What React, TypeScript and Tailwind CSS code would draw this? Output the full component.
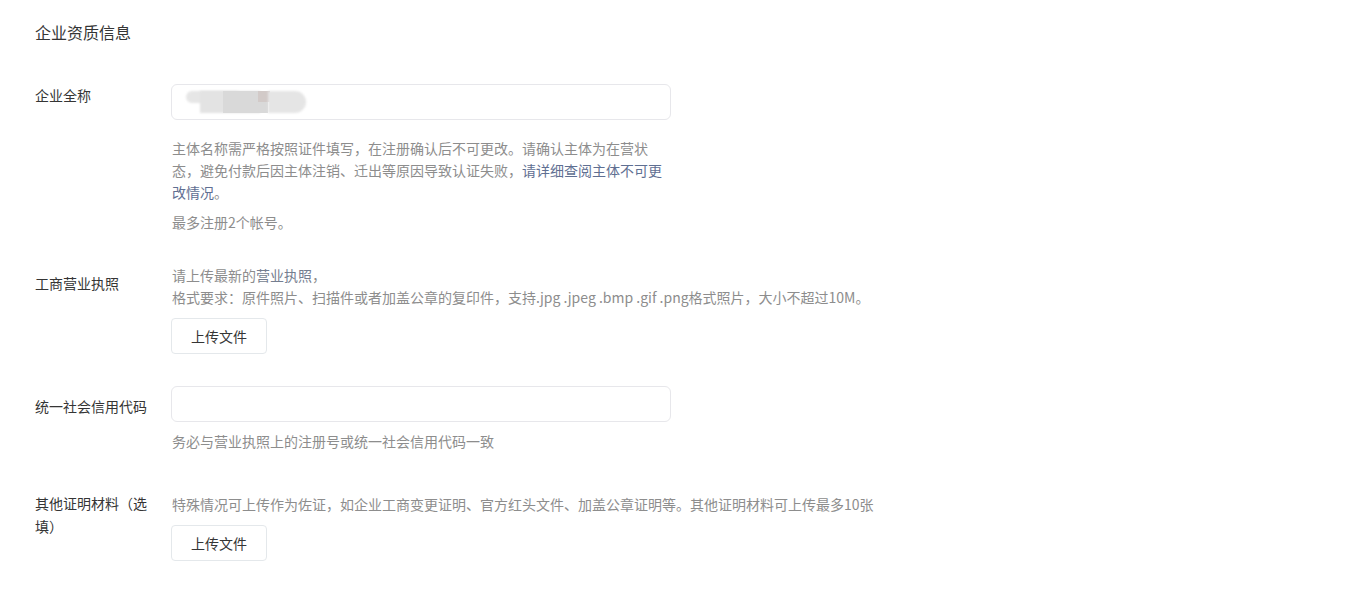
import React from "react";

const font = { fontFamily: '"Noto Sans CJK SC", "Noto Sans", sans-serif' };

function Redacted() {
  // 打码后的企业名称
  return (
    <div className="absolute left-[14px] top-[5px] h-[24px] w-[124px]">
      <div className="absolute left-0 top-[1px] h-[12px] w-[56px] rounded-full bg-[#e6e6e6] blur-[1px]" />
      <div className="absolute left-[14px] top-[1px] h-[22px] w-[60px] bg-[#e3e3e3] blur-[1px]" />
      <div className="absolute left-[37px] top-[1px] h-[22px] w-[45px] bg-[#d9d9d9] blur-[0.5px]" />
      <div className="absolute left-[72px] top-[1px] h-[11px] w-[12px] bg-[#d2cac8]" />
      <div className="absolute left-[82px] top-[1px] h-[22px] w-[38px] rounded-r-full bg-[#e5e5e5] blur-[1px]" />
    </div>
  );
}

function Row({
  label,
  labelClass = "",
  children,
  className = "",
}: {
  label: React.ReactNode;
  labelClass?: string;
  children: React.ReactNode;
  className?: string;
}) {
  return (
    <div className={"flex " + className}>
      <div className={"w-[118px] mr-[19px] shrink-0 text-[14px] leading-[23px] text-[#353535] " + labelClass}>
        {label}
      </div>
      <div className="flex-1">{children}</div>
    </div>
  );
}

function UploadButton() {
  return (
    <button className="w-[96px] h-[36px] rounded-[4px] border border-[#e4e8eb] bg-white text-[14px] text-[#353535]">
      上传文件
    </button>
  );
}

export default function App() {
  return (
    <div className="min-h-[601px] bg-white pl-[35px] pt-[20px]" style={font}>
      <h2 className="text-[16px] leading-[24px] text-[#353535] font-normal">企业资质信息</h2>

      {/* 企业全称 */}
      <Row label="企业全称" className="mt-[40px]" labelClass="-mt-[0.5px]">
        <div className="relative w-[500px] h-[36px] -ml-px rounded-[6px] border border-[#e7e7eb] bg-white">
          <Redacted />
        </div>
        <div className="mt-[17px] w-[500px] text-[14px] leading-[22px] text-[#8d8d8d]">
          <div>主体名称需严格按照证件填写，在注册确认后不可更改。请确认主体为在营状</div>
          <div>
            态，避免付款后因主体注销、迁出等原因导致认证失败，
            <span className="text-[#5f6f92]">请详细查阅主体不可更</span>
          </div>
          <div>
            <span className="text-[#5f6f92]">改情况</span>。
          </div>
        </div>
        <p className="mt-[8px] text-[14px] leading-[22px] text-[#8d8d8d]">最多注册2个帐号。</p>
      </Row>

      {/* 工商营业执照 */}
      <Row label="工商营业执照" className="mt-[31px]" labelClass="pt-[8px]">
        <p className="text-[14px] leading-[22px] text-[#8d8d8d]">
          请上传最新的<span className="text-[#757e90]">营业执照</span>，
          <br />
          格式要求：原件照片、扫描件或者加盖公章的复印件，支持.jpg .jpeg .bmp .gif .png格式照片，大小不超过10M。
        </p>
        <div className="mt-[10px] -ml-px">
          <UploadButton />
        </div>
      </Row>

      {/* 统一社会信用代码 */}
      <Row label="统一社会信用代码" className="mt-[32px]" labelClass="pt-[9px]">
        <div className="w-[500px] h-[36px] -ml-px rounded-[6px] border border-[#e7e7eb] bg-white" />
        <p className="mt-[8px] text-[14px] leading-[22px] text-[#8d8d8d]">
          务必与营业执照上的注册号或统一社会信用代码一致
        </p>
      </Row>

      {/* 其他证明材料 */}
      <Row label="其他证明材料（选填）" className="mt-[41px]" labelClass="-mt-[1px]">
        <p className="text-[14px] leading-[22px] text-[#8d8d8d]">
          特殊情况可上传作为佐证，如企业工商变更证明、官方红头文件、加盖公章证明等。其他证明材料可上传最多10张
        </p>
        <div className="mt-[10px] -ml-px">
          <UploadButton />
        </div>
      </Row>
    </div>
  );
}
